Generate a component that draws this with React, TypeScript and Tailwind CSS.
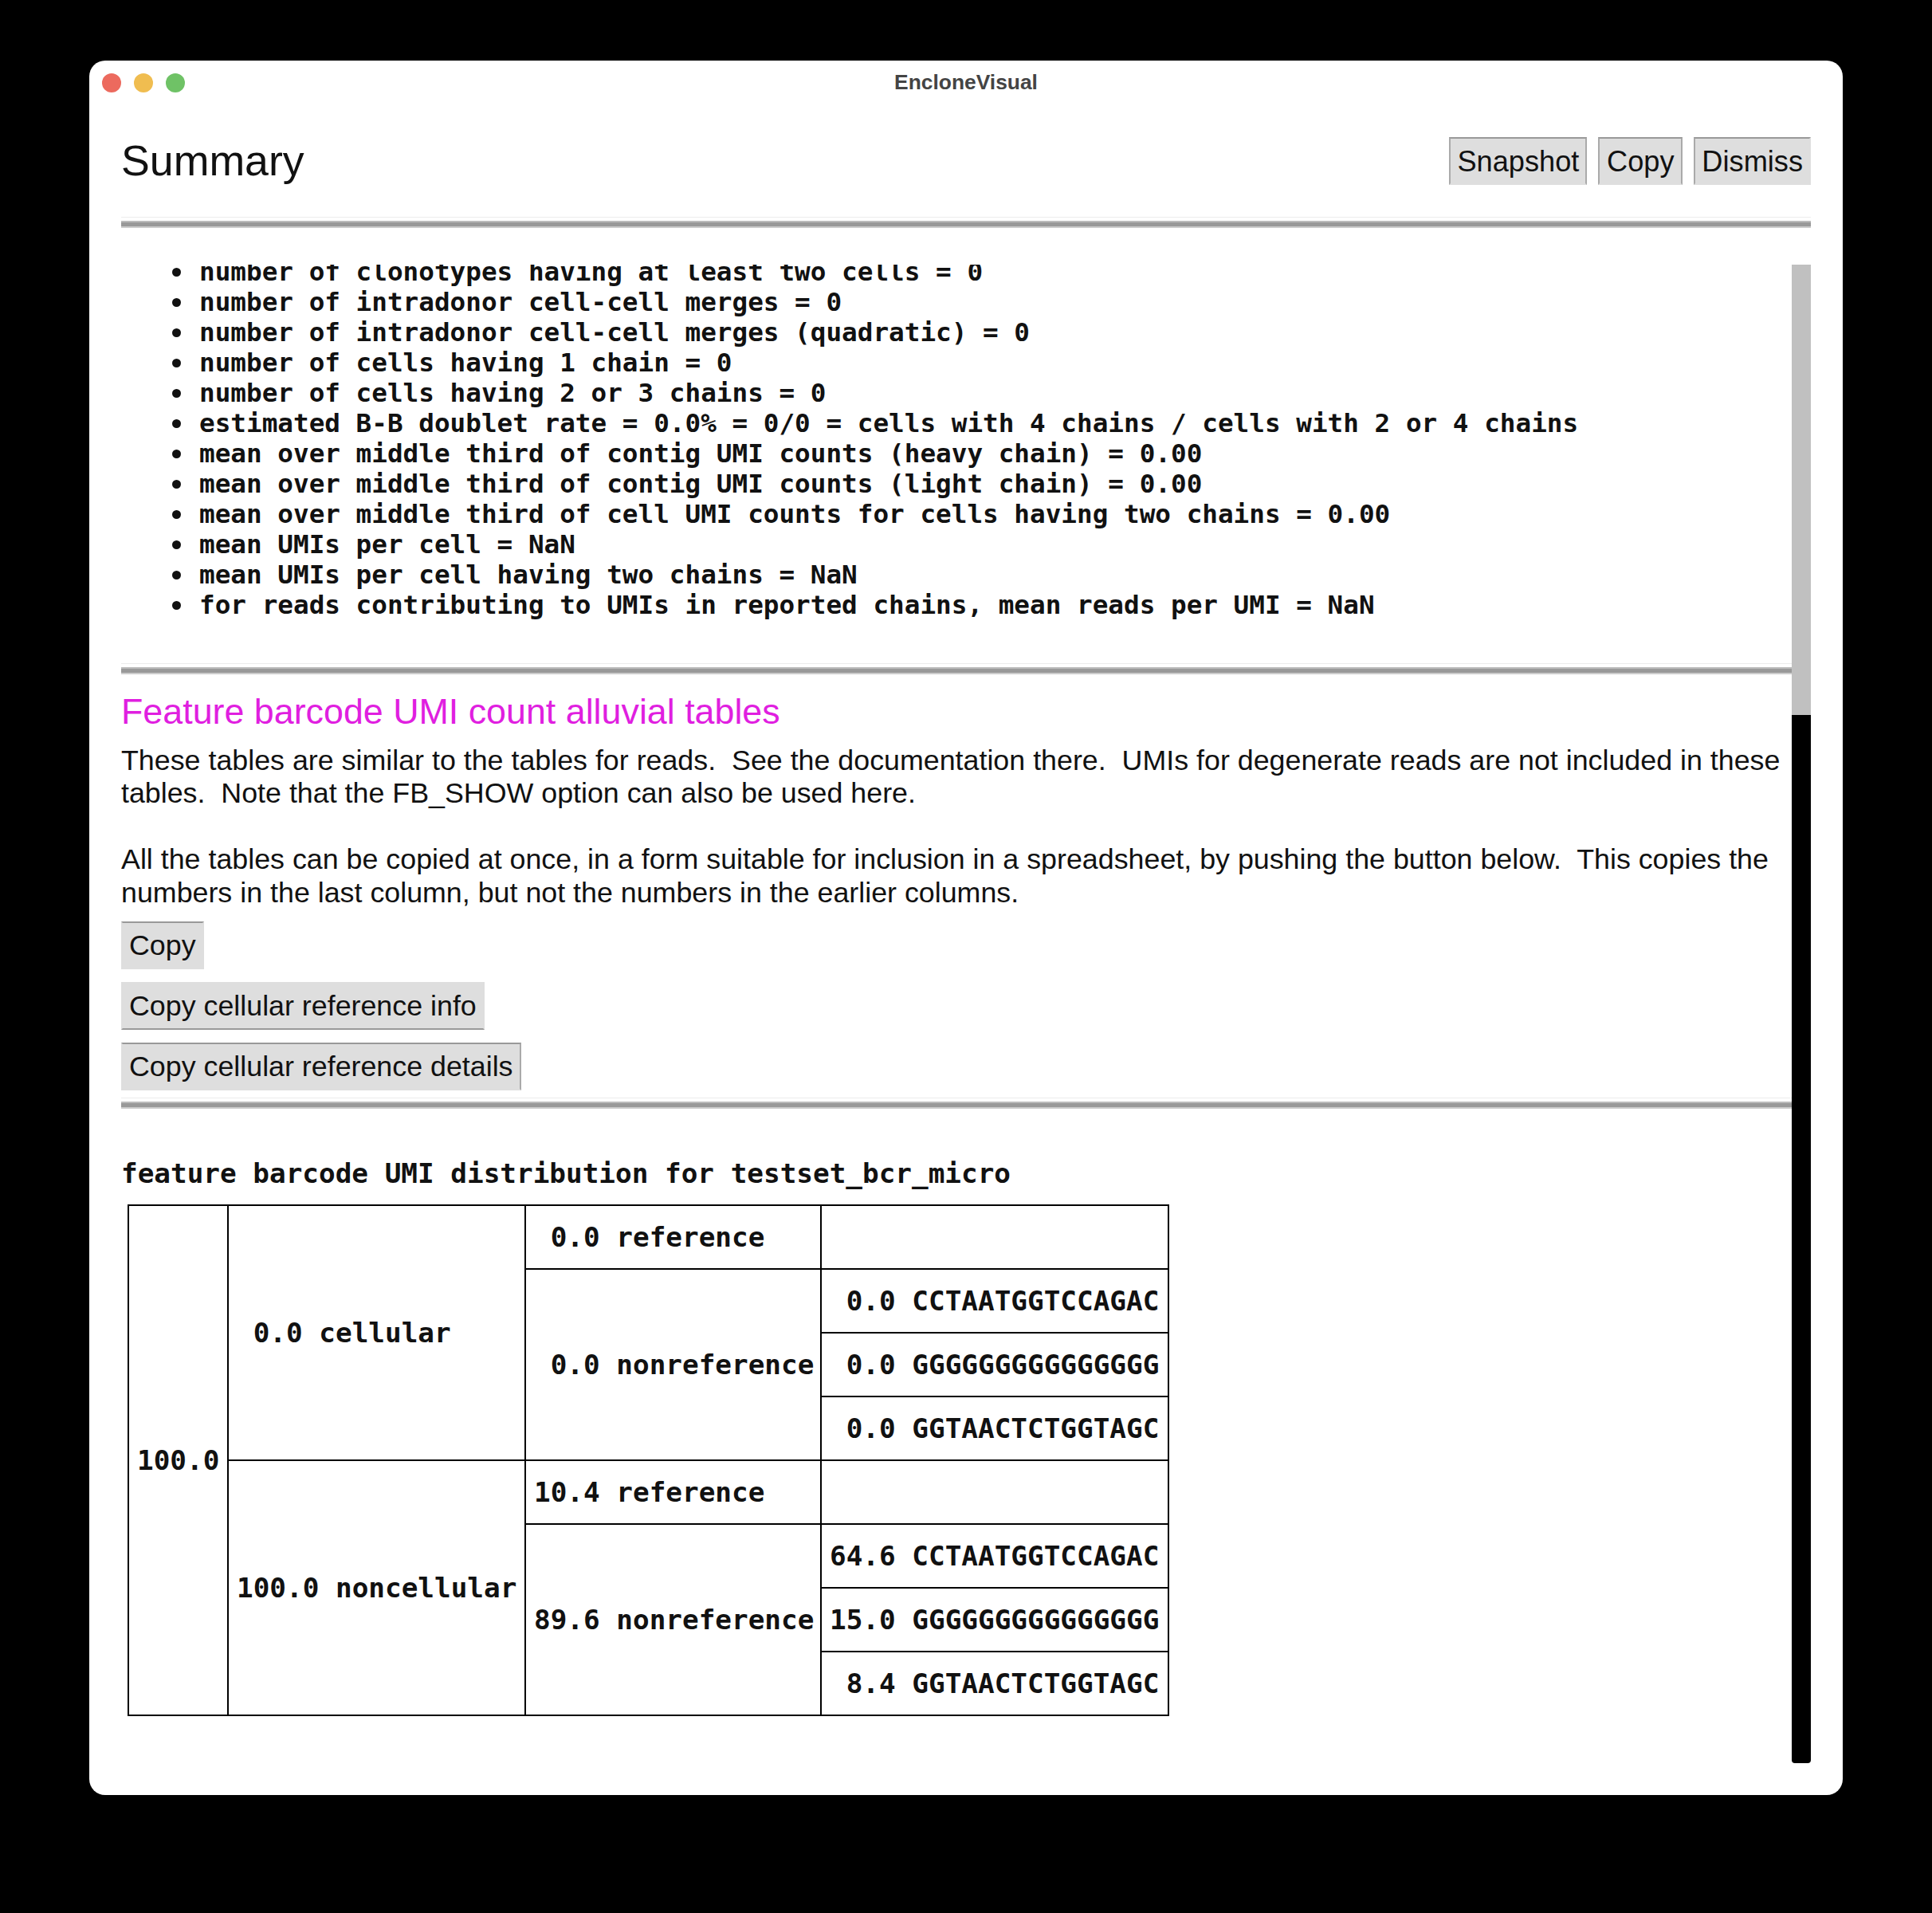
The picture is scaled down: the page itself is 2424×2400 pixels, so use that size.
const summaryLines = [
  "number of clonotypes having at least two cells = 0",
  "number of intradonor cell-cell merges = 0",
  "number of intradonor cell-cell merges (quadratic) = 0",
  "number of cells having 1 chain = 0",
  "number of cells having 2 or 3 chains = 0",
  "estimated B-B doublet rate = 0.0% = 0/0 = cells with 4 chains / cells with 2 or 4 chains",
  "mean over middle third of contig UMI counts (heavy chain) = 0.00",
  "mean over middle third of contig UMI counts (light chain) = 0.00",
  "mean over middle third of cell UMI counts for cells having two chains = 0.00",
  "mean UMIs per cell = NaN",
  "mean UMIs per cell having two chains = NaN",
  "for reads contributing to UMIs in reported chains, mean reads per UMI = NaN",
];

function Rule() {
  return (
    <div className="h-[14px] border-t border-t-[#ececec] pt-[4px] shrink-0">
      <div className="h-[9px] bg-[#999] border-t-2 border-b-2 border-t-[#bbb] border-b-[#ccc]" />
    </div>
  );
}

function Btn({ label, edge }: { label: string; edge: string }) {
  return (
    <button className={`h-[60px] px-[8px] pt-[2px] bg-[#dedede] leading-none text-[#111] border-2 border-[#dedede] ${edge}`}>
      {label}
    </button>
  );
}

function Cell({ text, rows }: { text?: string; rows?: number }) {
  return (
    <td rowSpan={rows} className="border-2 border-black px-[10px] whitespace-pre align-middle">
      {text}
    </td>
  );
}

export default function App() {
  return (
    <div className="w-[2424px] h-[2400px] bg-black pt-[76px] pl-[112px] font-['Liberation_Sans',Arial,sans-serif]">
      <div className="w-[2200px] h-[2176px] bg-white rounded-[20px] px-[40px] flex flex-col">
        {/* title bar */}
        <div className="relative h-[54px] pt-[1px] flex items-center justify-center text-[26.4px] font-bold text-[#444] shrink-0">
          <div className="absolute left-[-24px] top-[16px] flex gap-[16px]">
            <span className="w-[24px] h-[24px] rounded-full bg-[#ec6a5e]" />
            <span className="w-[24px] h-[24px] rounded-full bg-[#f0bd50]" />
            <span className="w-[24px] h-[24px] rounded-full bg-[#6fc266]" />
          </div>
          EncloneVisual
        </div>

        {/* header */}
        <div className="mt-[42px] h-[60px] flex items-center justify-between shrink-0">
          <h1 className="text-[53.7px] leading-none text-[#111]">Summary</h1>
          <div className="flex gap-[14px]">
            <Btn label="Snapshot" edge="text-[36.2px] border-t-[#999] border-l-[#aaa] border-r-[#aaa]" />
            <Btn label="Copy" edge="w-[106px] text-[36.2px] border-t-[#999] border-l-[#aaa] border-r-[#aaa]" />
            <Btn label="Dismiss" edge="text-[36.2px] border-t-[#999] border-l-[#aaa]" />
          </div>
        </div>
        <div className="mt-[40px] mb-[46px]">
          <Rule />
        </div>

        {/* scrolling body */}
        <div className="flex h-[1880px] shrink-0">
          <div className="flex-1 min-w-0 overflow-hidden text-[#111]">
            <ul className="-mt-[10px] pl-[64px] font-['DejaVu_Sans_Mono',monospace] font-bold text-[32.66px] leading-[38px]">
              {summaryLines.map((line) => (
                <li key={line} className="flex items-center">
                  <span className="w-[11px] h-[11px] rounded-full bg-[#111] mr-[23px] shrink-0" />
                  {line}
                </li>
              ))}
            </ul>
            <div className="mt-[54px]">
              <Rule />
            </div>
            <h2 className="mt-[19px] text-[44.8px] leading-[54px] text-[#e01fe0]">Feature barcode UMI count alluvial tables</h2>
            <p className="mt-[15px] text-[35.8px] leading-[41.4px] whitespace-pre-wrap">
              These tables are similar to the tables for reads.  See the documentation there.  UMIs for degenerate reads are not included in these tables.  Note that the FB_SHOW option can also be used here.
              <br />
              <br />
              All the tables can be copied at once, in a form suitable for inclusion in a spreadsheet, by pushing the button below.  This copies the numbers in the last column, but not the numbers in the earlier columns.
            </p>
            <div className="mt-[15px] flex flex-col items-start gap-[16px]">
              <Btn label="Copy" edge="text-[35.8px] border-t-[#999]" />
              <Btn label="Copy cellular reference info" edge="text-[35.8px] border-b-[#999]" />
              <Btn label="Copy cellular reference details" edge="text-[35.8px] border-t-[#999] border-r-[#aaa]" />
            </div>
            <div className="mt-[9px]">
              <Rule />
            </div>
            <div className="mt-[61px] font-['DejaVu_Sans_Mono',monospace] font-bold text-[34.35px] leading-[41px] text-[#111]">
              <div>feature barcode UMI distribution for testset_bcr_micro</div>
              <table className="ml-[8px] mt-[18px] w-[1305px] table-fixed border-collapse border-2 border-black [&_tr]:h-[80px]">
                <colgroup>
                  <col className="w-[125px]" />
                  <col className="w-[373px]" />
                  <col className="w-[371px]" />
                  <col className="w-[436px]" />
                </colgroup>
                <tbody>
                  <tr>
                    <Cell text="100.0" rows={8} />
                    <Cell text=" 0.0 cellular" rows={4} />
                    <Cell text=" 0.0 reference" />
                    <Cell />
                  </tr>
                  <tr>
                    <Cell text=" 0.0 nonreference" rows={3} />
                    <Cell text=" 0.0 CCTAATGGTCCAGAC" />
                  </tr>
                  <tr>
                    <Cell text=" 0.0 GGGGGGGGGGGGGGG" />
                  </tr>
                  <tr>
                    <Cell text=" 0.0 GGTAACTCTGGTAGC" />
                  </tr>
                  <tr>
                    <Cell text="100.0 noncellular" rows={4} />
                    <Cell text="10.4 reference" />
                    <Cell />
                  </tr>
                  <tr>
                    <Cell text="89.6 nonreference" rows={3} />
                    <Cell text="64.6 CCTAATGGTCCAGAC" />
                  </tr>
                  <tr>
                    <Cell text="15.0 GGGGGGGGGGGGGGG" />
                  </tr>
                  <tr>
                    <Cell text=" 8.4 GGTAACTCTGGTAGC" />
                  </tr>
                </tbody>
              </table>
            </div>
          </div>
          {/* scrollbar */}
          <div className="w-[24px] shrink-0 flex flex-col">
            <div className="h-[565px] bg-[#c0c0c0]" />
            <div className="flex-1 bg-black rounded-b-[4px]" />
          </div>
        </div>
      </div>
    </div>
  );
}
